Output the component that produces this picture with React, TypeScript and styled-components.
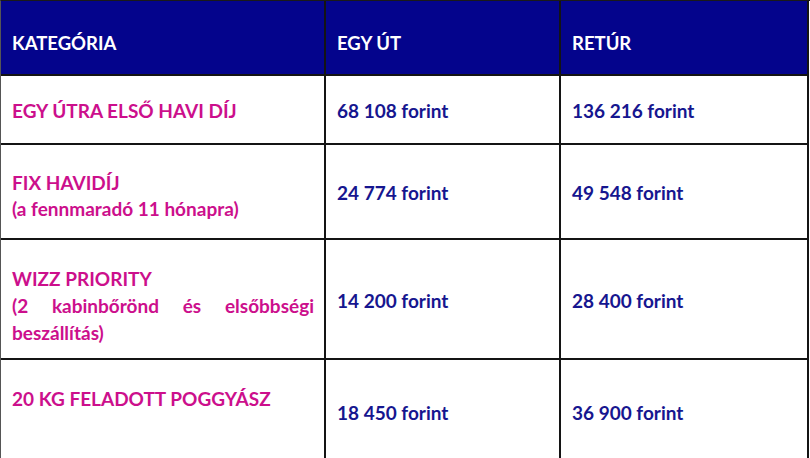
import { createGlobalStyle, styled, css } from "styled-components";

const GlobalStyle = createGlobalStyle`
  html, body {
    margin: 0;
    padding: 0;
    background: #ffffff;
  }
  body {
    font-family: Lato, "Open Sans", "Liberation Sans", sans-serif;
    overflow: hidden;
  }
`;

const Table = styled.div`
  display: grid;
  grid-template-columns: 325px 235px 248px;
  grid-template-rows: 75px 69px 95px 120px 104px;
  width: 810px;
  border-top: 1px solid #1a1a1a;
  border-left: 1px solid #555;
  box-sizing: border-box;
`;

// $shift > 0 pushes the text down, < 0 pulls it up
const Cell = styled.div<{ $head?: boolean; $label?: boolean; $justify?: boolean; $shift?: number }>`
  display: flex;
  flex-direction: column;
  justify-content: center;
  box-sizing: border-box;
  padding: 3px 10px 0 11px;
  border-right: 2px solid #141414;
  border-bottom: 2px solid #141414;
  font-size: 19px;
  font-weight: 700;
  line-height: 26px;
  color: #16168f;

  ${({ $head }) =>
    $head &&
    css`
      background: #04048c;
      color: #ffffff;
      padding-top: 10px;
      font-size: 18.5px;
    `}

  ${({ $label }) =>
    $label &&
    css`
      color: #cc0f8c;
    `}

  ${({ $justify }) =>
    $justify &&
    css`
      text-align: justify;
      text-align-last: left;
      line-height: 27px;
    `}

  ${({ $shift }) =>
    $shift !== undefined &&
    css`
      padding-top: ${$shift > 0 ? $shift : 0}px;
      padding-bottom: ${$shift < 0 ? -$shift : 0}px;
    `}
`;

const Line = styled.span`
  display: block;
`;

type Row = { label: string[]; oneWay: string; ret: string; justify?: boolean; shift?: number };

const rows: Row[] = [
  { label: ["EGY ÚTRA ELSŐ HAVI DÍJ"], oneWay: "68 108 forint", ret: "136 216 forint" },
  {
    label: ["FIX HAVIDÍJ", "(a fennmaradó 11 hónapra)"],
    oneWay: "24 774 forint",
    ret: "49 548 forint",
    shift: 8,
  },
  {
    label: ["WIZZ PRIORITY", "(2 kabinbőrönd és elsőbbségi beszállítás)"],
    oneWay: "14 200 forint",
    ret: "28 400 forint",
    justify: true,
    shift: 12,
  },
  { label: ["20 KG FELADOTT POGGYÁSZ"], oneWay: "18 450 forint", ret: "36 900 forint", shift: -24 },
];

export default function App() {
  return (
    <>
      <GlobalStyle />
      <Table>
        <Cell $head>KATEGÓRIA</Cell>
        <Cell $head>EGY ÚT</Cell>
        <Cell $head>RETÚR</Cell>
        {rows.map((r) => (
          <>
            <Cell key={r.label[0]} $label $justify={r.justify} $shift={r.shift}>
              {r.justify ? (
                <>
                  <Line>{r.label[0]}</Line>
                  <span>{r.label[1]}</span>
                </>
              ) : (
                r.label.map((l) => <Line key={l}>{l}</Line>)
              )}
            </Cell>
            <Cell>{r.oneWay}</Cell>
            <Cell>{r.ret}</Cell>
          </>
        ))}
      </Table>
    </>
  );
}
